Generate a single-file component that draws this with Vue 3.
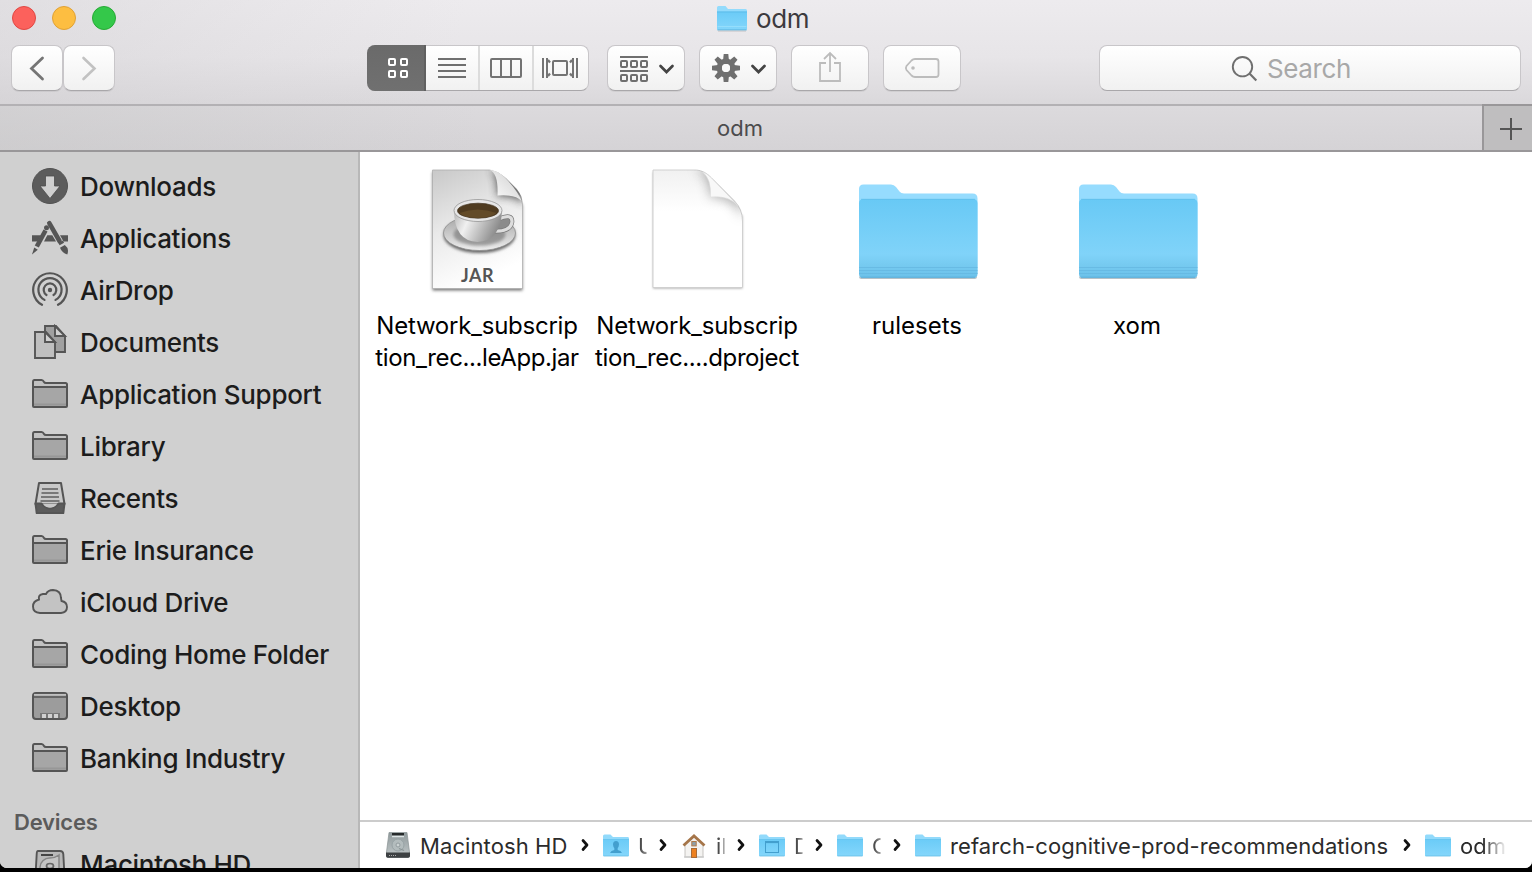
<script setup>
const sidebar = [
  { name: 'Downloads', icon: 'downloads' },
  { name: 'Applications', icon: 'apps' },
  { name: 'AirDrop', icon: 'airdrop' },
  { name: 'Documents', icon: 'documents' },
  { name: 'Application Support', icon: 'folder' },
  { name: 'Library', icon: 'folder' },
  { name: 'Recents', icon: 'recents' },
  { name: 'Erie Insurance', icon: 'folder' },
  { name: 'iCloud Drive', icon: 'cloud' },
  { name: 'Coding Home Folder', icon: 'folder' },
  { name: 'Desktop', icon: 'desktop' },
  { name: 'Banking Industry', icon: 'folder' },
]
const files = [
  { kind: 'jar', lines: ['Network_subscrip', 'tion_rec...leApp.jar'] },
  { kind: 'doc', lines: ['Network_subscrip', 'tion_rec....dproject'] },
  { kind: 'folder', lines: ['rulesets'] },
  { kind: 'folder', lines: ['xom'] },
]
const crumbs = [
  { name: 'Macintosh HD', icon: 'hd', w: 152 },
  { name: 'U', icon: 'users', w: 12, cut: true },
  { name: 'il', icon: 'home', w: 12, cut: true },
  { name: 'D', icon: 'window', w: 12, cut: true },
  { name: 'C', icon: 'plain', w: 12, cut: true },
  { name: 'refarch-cognitive-prod-recommendations', icon: 'plain', w: 444 },
  { name: 'odm', icon: 'plain', w: 46, fade: true },
]
const teeth = [0, 45, 90, 135, 180, 225, 270, 315]
</script>

<template>
  <div class="window">
    <svg class="defs" width="0" height="0">
      <defs>
        <linearGradient id="blue" x1="0" y1="0" x2="0" y2="1">
          <stop offset="0" stop-color="#68c9f5" /><stop offset=".7" stop-color="#80d3f9" /><stop offset=".84" stop-color="#76caf0" /><stop offset="1" stop-color="#6bc1ea" />
        </linearGradient>
        <linearGradient id="blueSmall" x1="0" y1="0" x2="0" y2="1">
          <stop offset="0" stop-color="#6acbf7" /><stop offset="1" stop-color="#84d6fb" />
        </linearGradient>
        <linearGradient id="metal" x1="0" y1="0" x2="0" y2="1">
          <stop offset="0" stop-color="#8f999b" /><stop offset="1" stop-color="#c2c9ca" />
        </linearGradient>
      </defs>
    </svg>

    <header class="titlebar">
      <div class="title-row">
        <div class="lights"><i class="light red"></i><i class="light yellow"></i><i class="light green"></i></div>
        <div class="title">
          <svg width="32" height="28" viewBox="0 0 32 28">
            <path d="M1 25V3.500Q1 2 2.500 2H9.500L12 5H29.500Q31 5 31 6.500V25Z" fill="#93dbfc" />
            <path d="M1 7.500H31V25Q31 26 30 26H2Q1 26 1 25Z" fill="url(#blueSmall)" />
            <path d="M1 8H31" stroke="#5bb9e6" stroke-width=".8" /><path d="M1.500 26H30.500" stroke="#57afd8" /><path d="M1.500 22.500H30.500" stroke="#9be1fd" stroke-width=".8" />
            <path d="M2 27.200H30" stroke="#c5c4c7" stroke-width=".8" />
          </svg>
          <span>odm</span>
        </div>
      </div>
      <div class="toolbar">
        <div class="btn nav"><svg width="50" height="44"><path d="M30.500 12L19.500 22.500L30.500 33" fill="none" stroke="#757575" stroke-width="2.800" stroke-linecap="round" /></svg></div>
        <div class="btn nav"><svg width="50" height="44"><path d="M19.500 12L30.500 22.500L19.500 33" fill="none" stroke="#c2c2c2" stroke-width="2.600" stroke-linecap="round" /></svg></div>
        <div class="segments">
          <div class="seg on">
            <svg width="59" height="46" fill="none" stroke="#fff" stroke-width="2"><rect x="22" y="14" width="6" height="6" rx="1" /><rect x="34" y="14" width="6" height="6" rx="1" /><rect x="22" y="26" width="6" height="6" rx="1" /><rect x="34" y="26" width="6" height="6" rx="1" /></svg>
          </div>
          <div class="seg s2"><svg width="53" height="44" stroke="#6f6f6f" stroke-width="2"><path d="M12 13H40M12 19H40M12 25H40M12 31H40" /></svg></div>
          <div class="seg s3"><svg width="52" height="44" fill="none" stroke="#737373" stroke-width="2"><rect x="11" y="13" width="30" height="18" rx="1" /><path d="M21 13V31M31 13V31" /></svg></div>
          <div class="seg s4"><svg width="54" height="44" fill="none" stroke="#737373" stroke-width="2"><rect x="19" y="15" width="14" height="14" rx="1" /><path d="M9 12V32M43 12V32M13 12V32M39 12V32" /><path d="M14 14L16 16.500M14 30L16 27.500M38 14L36 16.500M38 30L36 27.500" stroke-width="2.200" /></svg></div>
        </div>
        <div class="btn tool">
          <svg width="76" height="44" fill="none" stroke="#6f6f6f" stroke-width="2">
            <path d="M12 11H40M12 25H40" />
            <rect v-for="n in 3" :key="'a' + n" :x="3 + n * 10" y="15" width="6" height="6" rx="1" />
            <rect v-for="n in 3" :key="'b' + n" :x="3 + n * 10" y="29" width="6" height="6" rx="1" />
            <path d="M52.500 20L58.500 26L64.500 20" stroke="#444" stroke-width="2.700" stroke-linecap="round" />
          </svg>
        </div>
        <div class="btn tool">
          <svg width="76" height="44">
            <g transform="translate(26 22)" fill="#6f6f6f"><path v-for="a in teeth" :key="a" :transform="`rotate(${a})`" d="M-2.900 -8L-2.300 -14H2.300L2.900 -8Z" /></g>
            <circle cx="26" cy="22" r="6.700" fill="none" stroke="#6f6f6f" stroke-width="5.400" />
            <circle cx="26" cy="22" r="4" fill="#fafafa" />
            <path d="M52.500 20L58.500 26L64.500 20" fill="none" stroke="#444" stroke-width="2.700" stroke-linecap="round" />
          </svg>
        </div>
        <div class="btn tool"><svg width="76" height="44" fill="none" stroke="#bcbcbc" stroke-width="1.800"><path d="M34 17H28V35H48V17H42M38 26V7M32 13L38 7L44 13" /></svg></div>
        <div class="btn tool"><svg width="76" height="44" fill="none" stroke="#bcbcbc" stroke-width="1.800"><path d="M31 13H52Q54.500 13 54.500 15.500V28.500Q54.500 31 52 31H31Q29 31 27.500 29.500L22.500 24Q21.200 22 22.500 20L27.500 14.500Q29 13 31 13Z" /><circle cx="29" cy="22" r="1.800" fill="#bcbcbc" stroke="none" /></svg></div>
        <div class="search">
          <svg width="28" height="30" viewBox="0 -1 28 30" fill="none" stroke="#6f6f6f" stroke-width="1.900"><circle cx="11.500" cy="11.700" r="9.700" /><path d="M18.500 18.500L25.300 25.500" stroke-width="2.200" /></svg>
          <span>Search</span>
        </div>
      </div>
    </header>

    <div class="tabs"><div class="tab"><span>odm</span></div><div class="plus"><svg width="22" height="22"><path d="M11 0V22M0 11H22" stroke="#555" stroke-width="2" /></svg></div></div>

    <div class="body">
      <aside class="sidebar">
        <div v-for="s in sidebar" :key="s.name" class="row">
          <svg width="36" height="36" viewBox="0 0 36 36">
            <g v-if="s.icon === 'downloads'"><circle cx="18" cy="18" r="17.500" fill="#5c5c5c" stroke="#525252" /><path d="M13.500 8H22.500V18H28L18 30.500L8 18H13.500Z" fill="#d0d0d0" stroke="#4d4d4d" stroke-width=".8" /></g>
            <g v-else-if="s.icon === 'apps'">
              <path d="M0 15.200H9L5.500 21.500H0ZM15.300 15.200H20.300L24 21.500H12ZM28 15.200H36V21.500H31.500Z" fill="#555" />
              <path d="M17.300 3.200L27.500 21" stroke="#555" stroke-width="4.600" stroke-linecap="round" /><path d="M27 24.200L31.500 21.700" stroke="#555" stroke-width="2.500" />
              <path d="M28 27.800L32.800 25Q37.500 28.500 35.300 34.500Q30 33 28 27.800Z" fill="#555" />
              <path d="M13.500 10.500L4.800 26.500" stroke="#555" stroke-width="4.600" /><circle cx="14.500" cy="7.700" r="2.500" fill="#555" />
              <path d="M2.200 27.500L5.800 29.700L0 34.500Z" fill="#555" />
            </g>
            <g v-else-if="s.icon === 'airdrop'" fill="none" stroke="#555" stroke-width="2.200" stroke-linecap="round">
              <path d="M10 32.800A16.800 16.800 0 1 1 26 32.800" /><path d="M12.500 27.900A11.600 11.600 0 1 1 23.500 27.900" /><path d="M14.500 23A6.300 6.300 0 1 1 21.500 23" /><circle cx="18" cy="18" r="2.200" fill="#555" stroke="none" />
            </g>
            <g v-else-if="s.icon === 'documents'" stroke="#555" stroke-width="1.900">
              <path d="M13 2H24L33 12V28H13Z" fill="#a0a0a0" /><path d="M23 2V12H33Z" fill="#d0d0d0" />
              <path d="M3 8H14L23 18V34H3Z" fill="#bfbfbf" /><path d="M13 8V18H23Z" fill="#d0d0d0" />
            </g>
            <g v-else-if="s.icon === 'folder'">
              <path d="M1 30V6Q1 4 2.500 4H9.500Q11 4 12 6Q12.500 7 14 7H33.500Q35 7 35 8.500V30Q35 31 34 31H2Q1 31 1 30Z" fill="#c2c2c2" stroke="#555" stroke-width="2" />
              <path d="M2 12H34V30H2Z" fill="#a6a6a6" /><path d="M2 28.500H34" stroke="#979797" stroke-width="2" /><path d="M1 11H35" stroke="#555" stroke-width="1.800" />
            </g>
            <g v-else-if="s.icon === 'recents'" stroke="#555" stroke-width="2" stroke-linejoin="round">
              <path d="M7 3H29L32.500 24H3.500Z" fill="#c9c9c9" /><path d="M3.500 23.500H9.500Q13 28.500 18 28.500Q23 28.500 26.500 23.500H32.500L31.300 33H4.700Z" fill="#5c5c5c" />
              <path d="M10 9H26M9.500 13H26.500M9 17H27M8.500 21H27.500" stroke="#5f5f5f" stroke-width="1.700" />
              <path d="M10.500 23.500H25.500Q22.500 27.500 18 27.500Q13.500 27.500 10.500 23.500Z" fill="#c9c9c9" stroke="none" />
            </g>
            <path v-else-if="s.icon === 'cloud'" d="M8 29Q1 28.500 1 22.500Q1 17 7 15.500Q6 10.500 11 10H14Q16 6 21 6Q29 6.500 29 14L29.500 17Q35 18 35 23Q35 28.500 29 29Z" fill="#c3c3c3" stroke="#555" stroke-width="1.900" />
            <g v-else>
              <rect x="1" y="5" width="34" height="26" rx="3" fill="#9c9c9c" stroke="#555" stroke-width="2" /><path d="M2 6.800H34" stroke="#c0c0c0" stroke-width="1.700" /><path d="M1 9H35" stroke="#555" stroke-width="1.700" />
              <path d="M8 30V25H28V30" fill="#777" /><path d="M10 26H14V30H10ZM16 26H20V30H16ZM22 26H26V30H22Z" fill="#d0d0d0" />
            </g>
          </svg>
          <span>{{ s.name }}</span>
        </div>
        <div class="heading">Devices</div>
        <div class="row device">
          <svg width="36" height="36" viewBox="0 0 36 36"><path d="M6 1H28Q31 1 31.300 4L33 35H3L4.700 4Q4.800 1 6 1Z" fill="#b8b8b8" stroke="#555" stroke-width="1.900" /><path d="M9 5H21" stroke="#444" stroke-width="2" /><path d="M27 5V18A9.500 9.500 0 1 1 18 8Q23 8 27 5Z" fill="#c4c4c4" stroke="#858585" stroke-width="1.500" /><ellipse cx="18" cy="16" rx="3.500" ry="2.500" fill="none" stroke="#666" stroke-width="1.700" /></svg>
          <span>Macintosh HD</span>
        </div>
      </aside>

      <main class="main">
        <section class="grid">
          <div v-for="(f, i) in files" :key="i" class="file">
            <svg v-if="f.kind === 'jar'" width="128" height="128" viewBox="-.5 0 128 128">
              <defs>
                <linearGradient id="jarPage" x1="0" y1="0" x2=".35" y2="1"><stop offset="0" stop-color="#c8c8c8" /><stop offset=".5" stop-color="#eaeaea" /><stop offset="1" stop-color="#fff" /></linearGradient>
                <linearGradient id="jarFold" x1="0" y1="1" x2="1" y2="0"><stop offset="0" stop-color="#fff" /><stop offset="1" stop-color="#ccc" /></linearGradient>
                <linearGradient id="cup" x1="0" y1="0" x2="1" y2=".3"><stop offset="0" stop-color="#b5b5b5" /><stop offset=".35" stop-color="#f0f0f0" /><stop offset="1" stop-color="#8b8b8b" /></linearGradient>
                <linearGradient id="saucer" x1="0" y1="0" x2="0" y2="1"><stop offset="0" stop-color="#a3a3a3" /><stop offset="1" stop-color="#ededed" /></linearGradient>
                <filter id="blur" x="-30%" y="-30%" width="160%" height="160%"><feGaussianBlur stdDeviation="1.600" /></filter>
                <filter id="foldBlur" x="-30%" y="-30%" width="160%" height="160%"><feGaussianBlur stdDeviation="4" /></filter>
                <clipPath id="jarClip"><path d="M19 3H76Q84 4 92 11L103 22Q109 29 109 37V121.500H19Z" /></clipPath>
              </defs>
              <path d="M19 5H77L109 38V123.500H19Z" fill="#777" filter="url(#blur)" />
              <path d="M19 3H76Q84 4 92 11L103 22Q109 29 109 37V121.500H19Z" fill="url(#jarPage)" stroke="#aaa" stroke-width=".7" />
              <g clip-path="url(#jarClip)"><path d="M77 2Q85 8 84 29Q102 27 109 37V25L92 8Z" fill="#444" opacity=".95" filter="url(#foldBlur)" /></g>
              <path d="M76 3Q85 6 84 28.500Q102 27 108 34Q105 25 92 11Q84 3 76 3Z" fill="url(#jarFold)" />
              <ellipse cx="66" cy="68" rx="36" ry="18" fill="#666" filter="url(#blur)" />
              <ellipse cx="66" cy="66" rx="36" ry="17.500" fill="url(#saucer)" stroke="#8e8e8e" stroke-width=".8" />
              <ellipse cx="66" cy="67.500" rx="26" ry="11" fill="#777" opacity=".65" filter="url(#blur)" />
              <path d="M85 52Q99 46 98.500 55Q97 65 80 64" fill="#8b8b8b" stroke="#787878" stroke-width="4.600" /><path d="M85 52Q99 46 98.500 55Q97 65 80 64" fill="none" stroke="#ddd" stroke-width="3.200" />
              <path d="M40.500 44Q41 74 64 75Q87 74 88.500 44Z" fill="url(#cup)" />
              <ellipse cx="64.500" cy="43.500" rx="24" ry="11" fill="#e7e7e7" stroke="#8b8b8b" stroke-width=".7" />
              <ellipse cx="64.500" cy="43.700" rx="20.500" ry="7.500" fill="#4f3b20" stroke="#40301c" stroke-width=".7" /><path d="M46 46Q64 39 83 46Q78 50.500 64.500 51Q50 50.500 46 46Z" fill="#634b28" />
              <text x="64" y="114.500" text-anchor="middle" class="jar-text">JAR</text>
            </svg>
            <svg v-else-if="f.kind === 'doc'" width="128" height="128" viewBox="-.5 0 128 128">
              <defs>
                <filter id="docBlur" x="-30%" y="-30%" width="160%" height="160%"><feGaussianBlur stdDeviation="6" /></filter>
                <filter id="docShadow"><feGaussianBlur stdDeviation="1" /></filter>
                <linearGradient id="docPage" x1="0" y1="0" x2="0" y2="1"><stop offset="0" stop-color="#f1f1f1" /><stop offset=".35" stop-color="#fff" /></linearGradient>
                <clipPath id="docClip"><path d="M19.500 3H63Q71 3.500 78 11L101 34Q109 42 109 54V120.500H19.500Z" /></clipPath>
              </defs>
              <path d="M19.500 5H65L109 49V121.500H19.500Z" fill="#aaa" filter="url(#docShadow)" />
              <path d="M19.500 3H63Q71 3.500 78 11L101 34Q109 42 109 54V120.500H19.500Z" fill="url(#docPage)" stroke="#d0d0d0" />
              <g clip-path="url(#docClip)"><path d="M62 3Q77 8 77 30Q100 28 109 52V20L80 0Z" fill="#888" opacity=".7" filter="url(#docBlur)" /></g>
              <path d="M69 5Q78 12 77 30Q95 28 105 39L78 11Q73 6 69 5Z" fill="#f8f8f8" stroke="#ddd" stroke-width=".6" />
            </svg>
            <svg v-else width="128" height="128" viewBox="0 0 128 128">
              <path d="M6 109.500Q6 112 8.500 112H121.500Q124 112 124 109.500Z" fill="#b5c1c7" />
              <path d="M6 107V22Q6 17.500 10.500 17.500H38Q41 17.500 43 20L46.500 24.500Q48 26.500 51 26.500H119.500Q124.500 26.500 124.500 31.500V107Z" fill="#96dcfe" />
              <path d="M6 36.500Q6 32 10.500 32H120Q124.500 32 124.500 36.500V107Q124.500 110.700 121 110.700H9.500Q6 110.700 6 107Z" fill="url(#blue)" />
              <path d="M8 32.300H122" stroke="#5fbde8" stroke-width=".7" /><path d="M6 100.500H124.500M6 103.500H124.500M6 106.500H124.500" stroke="#64b8e1" stroke-width=".8" /><path d="M8 110.200H122" stroke="#5aafd9" stroke-width="1" />
            </svg>
            <div class="label"><div v-for="l in f.lines" :key="l">{{ l }}</div></div>
          </div>
        </section>

        <footer class="pathbar">
          <template v-for="(c, i) in crumbs" :key="i">
            <svg class="crumb-icon" width="28" height="30" viewBox="0 0 28 30">
              <g v-if="c.icon === 'hd'">
                <path d="M5 2.500H23L25.500 22V26Q25.500 27.500 24 27.500H4Q2.500 27.500 2.500 26V22Z" fill="url(#metal)" stroke="#899294" stroke-width=".7" /><path d="M2 22.500H26V26Q26 27.800 24 27.800H4Q2 27.800 2 26Z" fill="#3d4143" /><path d="M5 25.500H12" stroke="#aaa" stroke-dasharray="1 1" />
                <rect x="8" y="3" width="12" height="2.500" fill="#262a2b" /><path d="M8 6.500H20" stroke="#dde4e5" stroke-width="1.500" /><circle cx="14" cy="15" r="6" fill="#b3bcbd" stroke="#98a3a5" /><circle cx="14" cy="15" r="2" fill="#ccd3d3" stroke="#929c9e" /><path d="M15 18.500L20 20.500" stroke="#899395" stroke-width="1.200" />
              </g>
              <g v-else-if="c.icon === 'home'">
                <path d="M5 14L14 7L23 14V27H5Z" fill="#f4f3f1" stroke="#b9b5b2" stroke-width=".8" /><path d="M4 27H24" stroke="#ccc" stroke-width="1.500" /><path d="M3.500 15.500L14 6L24.500 15.500" fill="none" stroke="#a57549" stroke-width="2.800" /><rect x="11.800" y="11.500" width="4.400" height="4.400" fill="#8e9fa8" stroke="#b17946" /><rect x="11.500" y="18.500" width="5" height="9" fill="#ed801f" stroke="#a86b37" />
              </g>
              <g v-else>
                <path d="M1 26V6Q1 4.500 2.500 4.500H8.500L11 7H26Q27 7 27 8.500V26Z" fill="#92dafb" /><path d="M1 9H27V25Q27 26 26 26H2Q1 26 1 25Z" fill="url(#blueSmall)" /><path d="M1.500 26H26.500" stroke="#66bde5" stroke-width=".8" /><path d="M1 9.500H27" stroke="#6ac2eb" stroke-width=".6" />
                <path v-if="c.icon === 'users'" d="M14 11Q17 11 17 14.500Q16.800 17 15.700 18V20Q19 20.500 20 23H8Q9 20.500 12.300 20V18Q11.200 17 11 14.500Q11 11 14 11Z" fill="#439fce" />
                <g v-if="c.icon === 'window'"><rect x="7.500" y="11.500" width="13" height="11" fill="none" stroke="#439fce" /><path d="M7 12.200H21" stroke="#439fce" stroke-width="1.800" /></g>
              </g>
            </svg>
            <span class="crumb" :class="{ cut: c.cut, fade: c.fade }" :style="{ width: c.w + 'px' }">{{ c.name }}</span>
            <svg v-if="i < crumbs.length - 1" class="sep" width="30" height="14"><path d="M11 2.500L15 7L11 11.500" fill="none" stroke="#111" stroke-width="2.700" stroke-linecap="round" stroke-linejoin="round" /></svg>
          </template>
        </footer>
      </main>
    </div>
  </div>
</template>

<style>
html, body { margin: 0; background: #000; overflow: hidden; }
</style>
<style scoped>
* { box-sizing: border-box; }
svg { display: block; flex: none; }
.defs { position: absolute; }
.window { width: 1532px; height: 868px; overflow: hidden; background: #fff; display: flex; flex-direction: column; border-radius: 0 0 7px 7px; font-family: Inter, "Liberation Sans", sans-serif; color: #1c1c1c; }
.titlebar { height: 106px; flex: none; border-bottom: 2px solid #b3b1b4; background: linear-gradient(100deg, rgba(208,206,209,.42) 0, rgba(215,213,216,.22) 260px, rgba(220,220,220,0) 460px), linear-gradient(#edebee, #e7e5e8 55%, #dad8db); }
.title-row { height: 45px; display: flex; align-items: flex-start; }
.lights { display: flex; gap: 16px; padding: 6px 0 0 12px; width: 716px; }
.light { width: 24px; height: 24px; border-radius: 50%; border: 1px solid; }
.red { background: #fc615c; border-color: #e04843; }
.yellow { background: #fdbe41; border-color: #e0a136; }
.green { background: #34c84a; border-color: #27aa35; }
.title { display: flex; gap: 8px; padding-top: 4px; font-size: 26px; line-height: 30px; color: #3c3a3d; letter-spacing: -.4px; }
.toolbar { display: flex; padding-left: 11px; height: 46px; }
.btn { height: 46px; border: 1px solid #c8c6c9; border-bottom-color: #a9a7aa; border-radius: 8px; background: linear-gradient(#fff, #f1f1f1); box-shadow: 0 1px 0 rgba(0,0,0,.06); overflow: hidden; }
.nav { width: 52px; }
.segments { display: flex; margin-left: 252px; width: 222px; height: 46px; border-radius: 8px; border: 1px solid #c8c6c9; border-bottom-color: #a9a7aa; border-left: 0; background: linear-gradient(#fff, #f1f1f1); margin-right: 4px; }
.seg.on { width: 59px; height: 46px; margin-top: -1px; background: linear-gradient(#6a6a6a, #707070); border-radius: 8px 0 0 8px; border-right: 2px solid #606060; }
.s2 { width: 54px; border-right: 2px solid #dcdcdc; }
.s3 { width: 54px; border-right: 2px solid #dcdcdc; }
.s2 svg, .s3 svg { margin-right: -2px; }
.s4 { width: 54px; }
.tool { width: 78px; margin-left: 14px; }
.search { margin-left: 138px; width: 422px; height: 46px; border: 1px solid #c8c6c9; border-bottom-color: #a9a7aa; border-radius: 8px; background: linear-gradient(#fff, #f1f1f1); display: flex; padding: 8px 0 0 131px; font-size: 26px; line-height: 30px; color: #a8a8a8; gap: 8px; letter-spacing: -.4px; }
.tabs { height: 46px; flex: none; display: flex; border-bottom: 2px solid #999799; background: linear-gradient(90deg, rgba(195,195,195,.4), rgba(210,210,210,0) 480px), linear-gradient(#dcdadd, #d5d3d6); }
.tab { width: 1482px; padding-left: 717px; font-size: 22px; line-height: 44px; color: #4c4b4d; }
.plus { width: 50px; border-left: 2px solid #999799; background: #bfbebf; padding: 12px 0 0 16px; box-shadow: 0 -2px 0 #999799; }
.body { flex: 1; display: flex; min-height: 0; }
.sidebar { width: 360px; flex: none; background: #d0d0d0; border-right: 2px solid #b8b8b8; padding-top: 8px; overflow: hidden; }
.row { height: 52px; display: flex; align-items: center; padding-left: 32px; gap: 12px; font-size: 26px; font-weight: 450; white-space: nowrap; letter-spacing: -.3px; }
.row span { line-height: 32px; padding-top: 2px; }
.heading { margin-top: 22px; height: 32px; line-height: 32px; padding-left: 14px; font-size: 22px; font-weight: 600; color: #5b5b5b; letter-spacing: -.2px; }
.device svg { margin-top: 8px; }
.main { flex: 1; display: flex; flex-direction: column; min-width: 0; background: #fff; }
.grid { flex: 1; display: flex; padding: 15px 0 0 7px; }
.file { width: 220px; display: flex; flex-direction: column; align-items: center; }
.label { margin-top: 15px; font-size: 24px; line-height: 32px; text-align: center; color: #000; white-space: nowrap; }
.label div:first-child:not(:last-child) { letter-spacing: -.25px; }
.label div:nth-child(2) { letter-spacing: -.4px; }
.jar-text { font: bold 18px Lato, sans-serif; fill: #555; letter-spacing: .5px; }
.pathbar { height: 48px; flex: none; border-top: 2px solid #ccc; display: flex; padding: 0 0 0 24px; align-items: center; }
.crumb-icon { margin-right: 8px; }
.crumb { flex: none; font-size: 22px; line-height: 30px; padding-top: 2px; letter-spacing: .09px; white-space: nowrap; color: #2b2b2b; }
.cut { overflow: hidden; -webkit-mask-image: linear-gradient(90deg, #000, rgba(0,0,0,.5) 8px, transparent 9px); mask-image: linear-gradient(90deg, #000, rgba(0,0,0,.5) 8px, transparent 9px); }
.fade { -webkit-mask-image: linear-gradient(90deg, #000 22px, transparent 47px); mask-image: linear-gradient(90deg, #000 22px, transparent 47px); }
</style>
